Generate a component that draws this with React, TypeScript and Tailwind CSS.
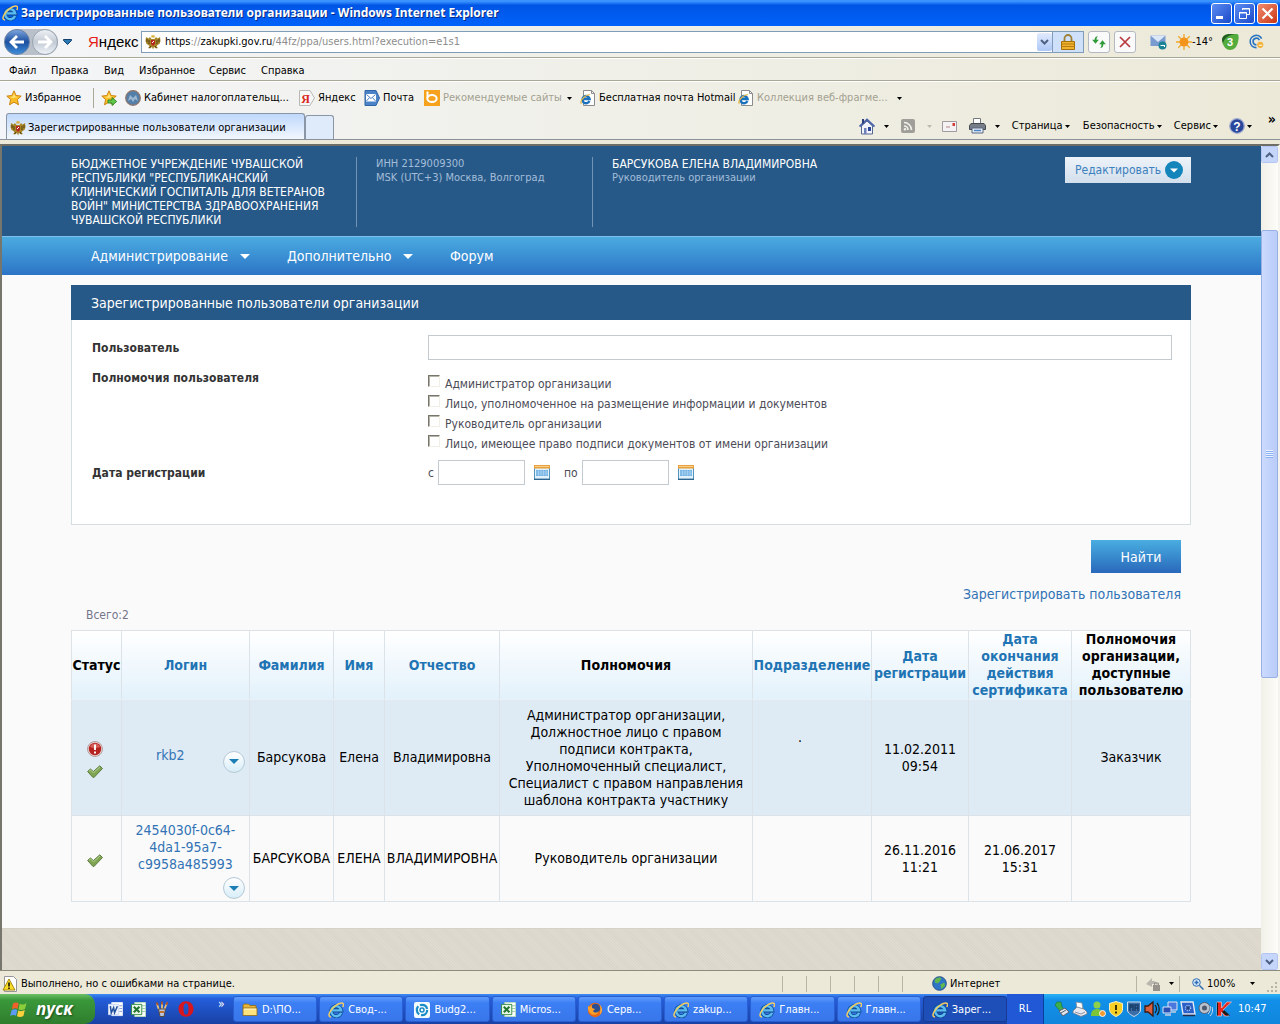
import React, { useState } from 'react';
import { clsx } from 'clsx';

type IconProps = { className?: string };

/* ---------- Icons ---------- */

function IeIcon({ className = 'size-4' }: IconProps) {
    return (
        <svg viewBox="0 0 16 16" className={clsx('shrink-0', className)} fill="none" aria-hidden="true">
            <path d="M13 10.8A5 5 0 1 1 13.2 8.4H4.8" stroke="#0d4a8f" strokeWidth="4" />
            <path d="M13 10.8A5 5 0 1 1 13.2 8.4H4.8" stroke="#5cbcf2" strokeWidth="2.4" />
            <path d="M3 15C-.4 15 .8 10.4 4.6 6.2S13.6 0 15 1.4c1 .8.6 2.2-.2 3.6" stroke="#f0cd62" strokeWidth="1.5" />
        </svg>
    );
}

function IePageIcon() {
    return (
        <svg viewBox="0 0 16 16" className="size-4 shrink-0" fill="none" aria-hidden="true">
            <path d="M3.5.5h8l3 3v12h-11z" fill="#fff" stroke="#8b8b8b" />
            <path d="M11.5.5v3h3" stroke="#8b8b8b" />
            <path d="M9.4 11A3.6 3.6 0 1 1 9.6 9H3.5" stroke="#1970bd" strokeWidth="2.4" />
            <path d="M1.5 13.8C-.8 12 3.5 5.5 10 4.5" stroke="#e7b844" strokeWidth="1.2" />
        </svg>
    );
}

function EagleIcon() {
    return (
        <svg viewBox="0 0 16 16" className="size-4 shrink-0" aria-hidden="true">
            <path d="M6.5 5 5 3 3.500 4.500 1 3 .5 7l1 3 2 1 1 1.500L3 14l2 .5L7 13l1 2.500L9 13l2 1.500 2-.5-1.500-1.500 1-1.500 2-1 1-3L15 3l-2.500 1.500L11 3 9.500 5z" fill="#a88628" />
            <path d="M2 5v3M4 6v4M14 5v3M12 6v4M6 12l-1.500 2M10 12l1.500 2" stroke="#4b3810" strokeWidth=".9" />
            <path d="m6 1 1 1 1-1.500L9 2l1-1-.5 2.500h-3z" fill="#d9ad35" />
            <path d="M6 6h4v4l-2 2-2-2z" fill="#b52a1e" />
            <path d="m7 9 2-2" stroke="#fff" />
        </svg>
    );
}

function StarIcon({ add = false }: { add?: boolean }) {
    return (
        <svg viewBox="0 0 16 16" className="size-4 shrink-0" aria-hidden="true">
            <path d="m8 .8 2.100 4.700 5.100.6-3.800 3.500 1.100 5.200L8 12.200l-4.500 2.600 1.100-5.200L.8 6.100l5.100-.6z" fill="#fbbd25" stroke="#c77d0c" strokeWidth=".9" />
            <path d="M8 3 9 6.500l3 .5-5 1-3-1 3-.5z" fill="#ffe684" />
            {add && <path d="M7 10h4V7.500l4.700 4-4.700 4V13H7z" fill="#62c64b" stroke="#207f1d" strokeWidth=".8" />}
        </svg>
    );
}

function CalendarIcon() {
    return (
        <svg viewBox="0 0 16 15" className="h-[15px] w-4" aria-hidden="true">
            <path d="M.5.5h15v14H.5z" fill="#e2f2fd" stroke="#5592bd" />
            <path d="M0 0h16v3.500H0z" fill="#e8a13c" />
            <path d="M1 1.500h14" stroke="#f8cf86" />
            <path d="M2 5h12v6H2z" fill="#6fb0e4" />
            <path d="M2 7h12M2 9h12M4.500 5v6M7 5v6M9.500 5v6M12 5v6" stroke="#c4e1f7" strokeWidth=".5" />
            <path d="M0 14.300h16" stroke="#2f6691" strokeWidth="1.400" />
        </svg>
    );
}

function CheckIcon() {
    return (
        <svg viewBox="0 0 16 13" className="h-[13px] w-4" aria-hidden="true">
            <path d="M.6 6.500 3.400 4l3 2.500L12.800.8l2.700 2.700L7.200 12.300H5.800z" fill="#7fa552" stroke="#55753a" strokeWidth=".9" />
            <path d="m2 6.300 1.500-1.200 3 2.600L13 2" stroke="#b4d093" fill="none" />
        </svg>
    );
}

function AlertIcon() {
    return (
        <svg viewBox="0 0 16 16" className="size-4" aria-hidden="true">
            <circle cx="8" cy="8" r="7.500" fill="#e9d5d5" stroke="#a88e90" strokeWidth=".8" />
            <circle cx="8" cy="8" r="6.200" fill="#b5221f" />
            <path d="M3 6a5.300 5.300 0 0 1 10 0c-3 1.500-7 1.500-10 0" fill="#d4605a" />
            <path d="M8 3.500v5.500M8 10.500v2" stroke="#fff" strokeWidth="1.900" />
        </svg>
    );
}

function Caret({ className = 'text-black' }: IconProps) {
    return (
        <svg viewBox="0 0 5 3" className={clsx('h-[3px] w-[5px] shrink-0', className)} aria-hidden="true">
            <path d="M0 0h5L2.500 3z" fill="currentColor" />
        </svg>
    );
}

function WordIcon() {
    return (
        <svg viewBox="0 0 16 16" className="size-[15px] shrink-0" fill="none" aria-hidden="true">
            <path d="M4 .5h11.500v14H4z" fill="#fff" stroke="#dfe8f8" />
            <path d="M12 4h3M12 7h3M12 10h3" stroke="#7f9bd0" />
            <path d="M.5 2.500h11v11H.5z" fill="#edf3ff" stroke="#c7d6f2" />
            <path d="m2.500 4.500 1 7L6 6l1 5.500 3-7" stroke="#23509c" strokeWidth="1.600" />
        </svg>
    );
}

function ExcelIcon() {
    return (
        <svg viewBox="0 0 16 16" className="size-[15px] shrink-0" fill="none" aria-hidden="true">
            <path d="M4 .5h11.500v15H4z" fill="#fff" stroke="#b9dcbd" />
            <path d="M12 4h3M12 7h3M12 10h3" stroke="#8cc494" />
            <path d="M.5 2.500h11v11H.5z" fill="#e9f7ea" stroke="#2f8a3b" />
            <path d="m3 5 6 6M9 5l-6 6" stroke="#24762f" strokeWidth="2.200" />
        </svg>
    );
}

function BrushesIcon() {
    return (
        <svg viewBox="0 0 16 16" className="size-4 shrink-0" fill="none" aria-hidden="true">
            <path d="m5 9-2-6M8 9V2M10 9l3-7" stroke="#e7c37c" strokeWidth="1.800" />
            <path d="M2.500 1.500 4 4M8 .5v3M13.500 1l-1 3" stroke="#a8532a" strokeWidth="1.800" />
            <path d="M4.500 8h7l-1.500 7.500H6z" fill="#b9c5de" stroke="#58493f" />
            <path d="M6 11h4" stroke="#c5702b" strokeWidth="2" />
        </svg>
    );
}

function OperaIcon() {
    return (
        <svg viewBox="0 0 16 16" className="size-4 shrink-0" aria-hidden="true">
            <path fillRule="evenodd" d="M8 .3c4.300 0 7.500 3.200 7.500 7.700S12.300 15.700 8 15.700.5 12.500.5 8 3.700.3 8 .3m0 2C6 2.300 5.500 4.500 5.500 8S6 13.700 8 13.700s2.500-2.200 2.500-5.700S10 2.300 8 2.300" fill="#d8161e" />
        </svg>
    );
}

function FolderIcon() {
    return (
        <svg viewBox="0 0 16 16" className="size-4 shrink-0" aria-hidden="true">
            <path d="M1 3.500 2 2h4.500L8 3.500h6v3H1z" fill="#e5b43a" stroke="#8f6a14" strokeWidth=".8" />
            <path d="M1 13.500V6h14v7.500z" fill="#fde27e" stroke="#8f6a14" strokeWidth=".8" />
            <path d="M2 7.200h12" stroke="#fff6c8" />
        </svg>
    );
}

function BudgetIcon() {
    return (
        <svg viewBox="0 0 16 16" className="size-4 shrink-0" fill="none" aria-hidden="true">
            <rect width="16" height="16" rx="2" fill="#f4fbff" />
            <circle cx="8" cy="8" r="5.200" stroke="#1b8cc6" strokeWidth="2.200" strokeDasharray="9 1.900" />
            <circle cx="8" cy="8" r="2" stroke="#1b8cc6" strokeWidth="1.500" />
        </svg>
    );
}

function FirefoxIcon() {
    return (
        <svg viewBox="0 0 16 16" className="size-4 shrink-0" aria-hidden="true">
            <circle cx="8" cy="8" r="7.200" fill="#e4671a" />
            <circle cx="8.500" cy="6.500" r="4.700" fill="#2c4f93" />
            <path d="M1 4 3 5l2-2v3l3 1-2 2c1 2 4 2 6 0-1 4-6 5-9 2C1 9 .6 6 1 4" fill="#f9a12b" />
            <path d="M13 3c2.500 3 2.500 7-.5 10 1-3 1.500-6 .5-10" fill="#fbc34a" />
        </svg>
    );
}

function WindowsFlag() {
    return (
        <svg viewBox="0 0 18 17" className="h-[17px] w-[18px]" aria-hidden="true">
            <path d="M3 2.500C5 1 7 1.200 8.700 2.300L7.500 8C5.800 7 4 7 1.800 8.200z" fill="#f0602b" />
            <path d="M9.700 2.800c2 1 4 1 6.800-.5L15 8c-2.500 1.500-4.500 1.300-6.500.4z" fill="#8ccd3b" />
            <path d="M1.600 9.200c2-1.200 4-1.200 5.700-.2L6 14.800c-1.800-1-3.800-1-5.800.2z" fill="#5b9bf1" />
            <path d="M8.300 9.500c2 1 4 1 6.500-.4L13.400 15c-2.400 1.400-4.500 1.200-6.400.2z" fill="#fbd03c" />
        </svg>
    );
}

/* ---------- Browser chrome ---------- */

function TitleBar() {
    const base = 'flex size-[21px] items-center justify-center rounded-[3px] border border-white';
    return (
        <header className="flex h-[26px] items-center gap-[2px] bg-linear-to-b from-[#3a93ff] from-5% via-[#0055e5] via-20% to-[#0062fb] pr-[2px] pl-[2px]">
            <IeIcon />
            <h1 className="flex-1 pl-[1px] font-['Noto_Sans',sans-serif] text-[12px] leading-5 font-bold whitespace-nowrap text-white [text-shadow:1px_1px_#0a2a80]">
                Зарегистрированные пользователи организации - Windows Internet Explorer
            </h1>
            <button aria-label="Свернуть" className={clsx(base, 'bg-linear-to-br from-[#5d8cf3] to-[#1b48c8]')}>
                <svg viewBox="0 0 13 13" className="size-[13px]"><path d="M1 9h7v3H1z" fill="#fff" /></svg>
            </button>
            <button aria-label="Восстановить" className={clsx(base, 'bg-linear-to-br from-[#5d8cf3] to-[#1b48c8]')}>
                <svg viewBox="0 0 13 13" className="size-[13px]" fill="none" stroke="#fff">
                    <path d="M4.500 3V1.500h7v6H9M4 2h8M1.500 5.500h7v6h-7zM1 6h8" />
                </svg>
            </button>
            <button aria-label="Закрыть" className={clsx(base, 'bg-linear-to-br from-[#f08a6c] to-[#c9330c]')}>
                <svg viewBox="0 0 13 13" className="size-[13px]"><path d="m1.500 1.500 10 10m0-10-10 10" stroke="#fff" strokeWidth="2.200" /></svg>
            </button>
        </header>
    );
}

function AddressRow() {
    const square = 'flex size-[22px] items-center justify-center rounded-[3px] border border-[#b4b8c2] bg-[#fafafa]';
    return (
        <div className="flex h-8 items-center border-b border-[#a9a796] pr-4 pl-1">
            <div className="flex h-[26px] items-center rounded-full bg-[#b9c0ca]">
                <button aria-label="Назад" className="flex size-[26px] items-center justify-center rounded-full border border-[#6681a8] bg-linear-to-b from-[#7ba3dc] via-[#1c4f9f] to-[#3f8edb]">
                    <svg viewBox="0 0 16 16" className="size-4"><path d="M8 2 2 8l6 6M2.500 8H15" stroke="#fff" strokeWidth="2.800" fill="none" /></svg>
                </button>
                <button aria-label="Вперед" className="ml-[2px] flex size-[26px] items-center justify-center rounded-full border border-[#9aa4b1] bg-linear-to-b from-[#eef1f5] via-[#c2cad4] to-[#eef3f8]">
                    <svg viewBox="0 0 16 16" className="size-4"><path d="m8 2 6 6-6 6M13.500 8H1" stroke="#fff" strokeWidth="2.800" fill="none" /></svg>
                </button>
            </div>
            <button aria-label="Последние страницы" className="mr-4 ml-[5px]">
                <svg viewBox="0 0 9 6" className="h-[6px] w-[9px]"><path d="M.5.5h8v1l-4 4-4-4z" fill="#2a78b4" stroke="#123f6b" /></svg>
            </button>
            <span className="w-[53px] font-['Liberation_Sans',sans-serif] text-[15px] leading-6 text-black">
                <span className="text-[#e61b1b]">Я</span>ндекс
            </span>
            <div className="flex h-[22px] min-w-0 flex-1 items-center border border-[#7f9db9] bg-white pl-[3px]">
                <EagleIcon />
                <div role="textbox" aria-label="Адрес" tabIndex={0} className="flex-1 pt-px pl-1 leading-4 whitespace-nowrap text-[#8d8d8d]">
                    <span className="text-black">https</span>://<span className="text-black">zakupki.gov.ru</span>/44fz/ppa/users.html?execution=e1s1
                </div>
                <button aria-label="Показать адреса" className="flex h-[18px] w-[15px] items-center justify-center rounded-[2px] bg-linear-to-b from-[#e1eafe] to-[#aec8f7]">
                    <svg viewBox="0 0 9 6" className="h-[6px] w-[9px]"><path d="m1 1 3.500 3.500L8 1" stroke="#4d6185" strokeWidth="2" fill="none" /></svg>
                </button>
            </div>
            <button aria-label="Отчет безопасности" className="mr-1 flex h-[22px] w-[31px] items-center justify-center border border-l-0 border-[#7f9db9] bg-[#cfe0fb]">
                <svg viewBox="0 0 14 16" className="h-4 w-[14px]">
                    <path d="M3.500 8V4.500a3.500 3.500 0 0 1 7 0V8" stroke="#9c8136" strokeWidth="1.800" fill="none" />
                    <path d="M.5 7.500h13v8H.5z" fill="#efb32f" stroke="#a56f0c" />
                    <path d="M1 10h12M1 12.500h12" stroke="#b97c12" />
                </svg>
            </button>
            <button aria-label="Обновить" className={clsx(square, 'mr-1')}>
                <svg viewBox="0 0 16 16" className="size-[14px]" fill="#2f9a38">
                    <path d="M7 1C4 1.500 3 3 3 5.500H.2L4 10l3.800-4.500H5.200C5.200 3.500 5.500 2 7 1M9 15c3-.5 4-2 4-4.500h2.800L12 6l-3.800 4.500h2.600c0 2-.3 3.500-1.800 4.500" />
                </svg>
            </button>
            <button aria-label="Остановить" className={clsx(square, 'mr-[14px]')}>
                <svg viewBox="0 0 12 12" className="size-3"><path d="m1 1 10 10M11 1 1 11" stroke="#b83a3f" strokeWidth="1.700" /></svg>
            </button>
            <div className="flex items-center gap-[8px]">
                <svg viewBox="0 0 18 16" className="h-4 w-[18px]">
                    <path d="M.5 1.500h15V12H.5z" fill="#7a9bd0" /><path d="M.5 1.500h15L8 8z" fill="#dce8f8" />
                    <circle cx="12.500" cy="11.500" r="4" fill="#1a8395" /><path d="M10.500 11.500h4.500M14.500 11v2" stroke="#fff" />
                </svg>
                <span className="flex items-center">
                    <svg viewBox="0 0 16 16" className="size-4">
                        <path d="M8 0v16M0 8h16M2.300 2.300l11.400 11.400M13.700 2.300 2.300 13.700" stroke="#f0a92d" strokeWidth="1.300" />
                        <circle cx="8" cy="8" r="4.500" fill="#f5941d" />
                    </svg>
                    -14°
                </span>
                <svg viewBox="0 0 18 16" className="h-4 w-[18px]">
                    <path d="M1 6C1 2 5 0 9 0h7c2 0 2 4 1 8-1 5-4 8-8 8S1 11 1 6" fill="#54ac3d" />
                    <path d="M1 6c0-4 4-6 8-6h5C8 1 4 3 2 9z" fill="#255e25" />
                    <text x="9" y="12" fill="#fff" fontSize="11" fontWeight="bold" textAnchor="middle" fontFamily="Liberation Sans">3</text>
                </svg>
                <svg viewBox="0 0 16 16" className="ml-[2px] size-[15px]" fill="none">
                    <path d="M13.500 5A6.500 6.500 0 1 0 8 14.500M11 6.500A3.500 3.500 0 1 0 8 11.500" stroke="#2873c2" strokeWidth="1.700" />
                    <circle cx="12" cy="11.500" r="3.300" fill="#f3b339" /><path d="M10.500 12h3.500" stroke="#fff" />
                </svg>
            </div>
        </div>
    );
}

const menuItems = [
    { name: 'Файл', width: 'w-[42px]' },
    { name: 'Правка', width: 'w-[53px]' },
    { name: 'Вид', width: 'w-[35px]' },
    { name: 'Избранное', width: 'w-[70px]' },
    { name: 'Сервис', width: 'w-[52px]' },
    { name: 'Справка', width: 'w-[60px]' },
];

function MenuRow() {
    return (
        <nav className="flex h-[23px] items-end border-t border-b border-t-white border-b-[#a9a796] pb-[2px] pl-[9px]">
            {menuItems.map((item) => (
                <button key={item.name} className={clsx('text-left whitespace-nowrap', item.width)}>{item.name}</button>
            ))}
        </nav>
    );
}

function FavoritesRow() {
    const link = 'flex items-center gap-[3px] whitespace-nowrap';
    return (
        <div className="flex h-8 items-center border-t border-white pt-px pl-[6px]">
            <button className={clsx(link, 'w-[87px]')}><StarIcon />Избранное</button>
            <span className="mr-[7px] h-5 w-px bg-[#a9a796]" />
            <button aria-label="Добавить" className="mr-2"><StarIcon add /></button>
            <a href="#" className={clsx(link, 'w-[174px]')}>
                <svg viewBox="0 0 16 16" className="size-4 shrink-0">
                    <circle cx="8" cy="8" r="7.300" fill="#547fa8" stroke="#8f7466" strokeWidth="1.200" />
                    <path d="m3 11 2-6 3 3 3-3 2 6-3-2-2 3-2-3z" fill="#9db9d2" />
                </svg>
                Кабинет налогоплательщ...
            </a>
            <a href="#" className={clsx(link, 'w-[65px]')}>
                <svg viewBox="0 0 16 16" className="size-4 shrink-0">
                    <path d="M.5.5H11L15.500 8 11 15.500H.5z" fill="#f7f7f7" stroke="#b8b8b8" />
                    <text x="6.500" y="12.500" fill="#dc251c" fontSize="12" fontWeight="bold" textAnchor="middle" fontFamily="Liberation Serif">Я</text>
                </svg>
                Яндекс
            </a>
            <a href="#" className={clsx(link, 'w-[60px]')}>
                <svg viewBox="0 0 16 16" className="size-4 shrink-0">
                    <path d="M1 .5h11L15.500 8 12 15.500H1z" fill="#4b83c8" stroke="#2f64a5" />
                    <path d="M2 4h10v7.500H2z" fill="#fff" /><path d="m2.500 4.500 4.500 4 4.500-4M2.500 11l3-3.500M11.500 11l-3-3.500" fill="none" stroke="#4b83c8" />
                </svg>
                Почта
            </a>
            <a href="#" className={clsx(link, 'w-[156px] text-[#a3a190]')}>
                <svg viewBox="0 0 16 16" className="size-4 shrink-0">
                    <path d="M0 0h16v16H0z" fill="#f6a21c" />
                    <path d="M3.500 1.500V8" stroke="#fff" strokeWidth="2" />
                    <ellipse cx="8" cy="8.500" rx="4.700" ry="3.500" stroke="#fff" strokeWidth="2" fill="none" />
                </svg>
                Рекомендуемые сайты
                <Caret className="ml-[2px] text-black" />
            </a>
            <a href="#" className={clsx(link, 'w-[158px]')}><IePageIcon />Бесплатная почта Hotmail</a>
            <a href="#" className={clsx(link, 'text-[#a3a190]')}>
                <IePageIcon />
                Коллекция веб-фрагме...
                <Caret className="ml-[6px] text-black" />
            </a>
        </div>
    );
}

function TabRow() {
    return (
        <div className="flex h-[27px] items-end border-b border-[#8a9198] pr-1 pl-[6px]">
            <button className="flex h-[26px] w-[299px] items-center gap-[2px] rounded-t-[3px] border border-b-0 border-[#8a95a5] bg-linear-to-b from-[#bfd8fb] to-[#f2f7fe] pt-[3px] pl-[3px] whitespace-nowrap">
                <EagleIcon />
                Зарегистрированные пользователи организации
            </button>
            <button aria-label="Новая вкладка" className="h-6 w-[29px] rounded-t-[3px] border border-b-0 border-[#8a95a5] bg-[#dfeafb]" />
            <div className="ml-auto flex h-[26px] items-center whitespace-nowrap">
                <button aria-label="Домой" className="mr-[9px]">
                    <svg viewBox="0 0 16 17" className="h-[17px] w-4">
                        <path d="M2.500 8v8h11V8L8 3z" fill="#f1f4fb" stroke="#55698f" />
                        <path d="m.5 8.500 7.500-7 7.500 7" stroke="#4b63a8" strokeWidth="1.800" fill="none" /><path d="M3 1h2v4L3 6z" fill="#2b3f7b" />
                        <path d="M5 10h2.500v6H5z" fill="#6c82b8" /><path d="M9 9h3v4H9z" fill="#2d4798" />
                    </svg>
                </button>
                <Caret className="mr-3 text-black" />
                <button aria-label="Каналы" className="mr-3">
                    <svg viewBox="0 0 14 14" className="size-[14px]">
                        <rect width="14" height="14" rx="2" fill="#9f9e98" />
                        <path d="M3 7a4 4 0 0 1 4 4M3 3.500a7.500 7.500 0 0 1 7.500 7.500" stroke="#f2f1ea" strokeWidth="1.600" fill="none" /><circle cx="4" cy="10.300" r="1.200" fill="#f2f1ea" />
                    </svg>
                </button>
                <Caret className="mr-[10px] text-[#bdbbae]" />
                <button aria-label="Почта" className="mr-3">
                    <svg viewBox="0 0 15 11" className="h-[11px] w-[15px]">
                        <path d="M.5.5h14v10H.5z" fill="#f4f2f2" stroke="#9f9ba0" /><path d="M10.500 2h2.500v3h-2.500z" fill="#d13d36" /><path d="M4 6h4" stroke="#b8838d" />
                    </svg>
                </button>
                <button aria-label="Печать" className="mr-[9px]">
                    <svg viewBox="0 0 17 16" className="h-4 w-[17px]">
                        <path d="M4.500.5h7v7h-7z" fill="#fff" stroke="#75787e" /><path d="M2 5.500h13l1.500 2v4H.5v-4z" fill="#777d86" stroke="#454a51" />
                        <path d="M3 10h11v5H3z" fill="#e9eef5" stroke="#586781" /><path d="M5 12.500h7" stroke="#4b83c8" strokeWidth="1.500" />
                    </svg>
                </button>
                <Caret className="mr-3 text-black" />
                <button className="flex w-[71px] items-center gap-[2px]">Страница<Caret /></button>
                <button className="flex w-[91px] items-center gap-[2px]">Безопасность<Caret /></button>
                <button className="flex w-[55px] items-center gap-[2px]">Сервис<Caret /></button>
                <button aria-label="Справка" className="flex items-center gap-[2px]">
                    <svg viewBox="0 0 16 16" className="size-4">
                        <circle cx="8" cy="8" r="7.300" fill="#29479b" stroke="#a4add0" strokeWidth="1.300" />
                        <text x="8" y="12.500" fill="#fff" fontSize="12" fontWeight="bold" textAnchor="middle" fontFamily="Liberation Sans">?</text>
                    </svg>
                    <Caret />
                </button>
                <span className="ml-4 self-start text-[14px] leading-3 font-bold">»</span>
            </div>
        </div>
    );
}

function ScrollBar() {
    const arrow = 'flex h-[17px] items-center justify-center rounded-[2px] border border-white bg-[#c6d6fb] outline-1 -outline-offset-1 outline-[#b3c6f1]';
    return (
        <div className="flex w-[17px] shrink-0 flex-col bg-linear-to-r from-[#f1f0e8] to-[#fdfdf9]">
            <button aria-label="Вверх" className={arrow}>
                <svg viewBox="0 0 9 6" className="h-[6px] w-[9px]"><path d="m1 5 3.500-3.500L8 5" stroke="#4d6185" strokeWidth="2" fill="none" /></svg>
            </button>
            <div className="flex-[67]" />
            <div className="flex flex-[446] items-center justify-center rounded-[2px] border border-[#98b0e4] bg-linear-to-r from-[#cbdafd] to-[#b9cbf8]">
                <span className="h-2 w-[7px] bg-[repeating-linear-gradient(#eef4fe_0_1px,#8cb0f8_1px_2px)]" />
            </div>
            <div className="flex-[275]" />
            <button aria-label="Вниз" className={arrow}>
                <svg viewBox="0 0 9 6" className="h-[6px] w-[9px]"><path d="m1 1 3.500 3.500L8 1" stroke="#4d6185" strokeWidth="2" fill="none" /></svg>
            </button>
        </div>
    );
}

/* ---------- Site ---------- */

function SiteHeader() {
    return (
        <div className="h-[90px] bg-[#275988] pt-[11px]">
            <div className="mx-auto flex max-w-[1121px] items-start pr-px leading-[14px]">
                <div className="w-[285px] shrink-0 text-[12px] text-white">
                    БЮДЖЕТНОЕ УЧРЕЖДЕНИЕ ЧУВАШСКОЙ<br />
                    РЕСПУБЛИКИ "РЕСПУБЛИКАНСКИЙ<br />
                    КЛИНИЧЕСКИЙ ГОСПИТАЛЬ ДЛЯ ВЕТЕРАНОВ<br />
                    ВОЙН" МИНИСТЕРСТВА ЗДРАВООХРАНЕНИЯ<br />
                    ЧУВАШСКОЙ РЕСПУБЛИКИ
                </div>
                <div className="h-[70px] w-[236px] shrink-0 border-l border-[#6f94b8] pl-[19px] text-[#a3bdd8]">
                    ИНН 2129009300<br />
                    MSK (UTC+3) Москва, Волгоград
                </div>
                <div className="h-[70px] flex-1 border-l border-[#6f94b8] pl-[19px] text-[#a3bdd8]">
                    <p className="text-[12px] text-white">БАРСУКОВА ЕЛЕНА ВЛАДИМИРОВНА</p>
                    Руководитель организации
                </div>
                <button className="flex h-[26px] w-[126px] items-center gap-1 bg-linear-to-b from-[#eef3f9] to-[#d3dfec] pl-[10px] text-[12px] text-[#3b80bd]">
                    Редактировать
                    <svg viewBox="0 0 18 18" className="size-[18px]"><circle cx="9" cy="9" r="9" fill="#1485bb" /><path d="M5 7.500h8L9 11.500z" fill="#fff" /></svg>
                </button>
            </div>
        </div>
    );
}

function SiteNav() {
    const arrow = <svg viewBox="0 0 10 5" className="h-[5px] w-[10px]"><path d="M0 0h10L5 5z" fill="#fff" /></svg>;
    return (
        <nav className="h-[39px] border-t border-[#7fc0ea] bg-linear-to-b from-[#4babe0] to-[#2d74c6] text-[14px] text-white">
            <div className="mx-auto flex h-full max-w-[1121px] items-center pr-px pl-5">
                <a href="#" className="flex w-[196px] items-center gap-3">Администрирование {arrow}</a>
                <a href="#" className="flex w-[163px] items-center gap-3">Дополнительно {arrow}</a>
                <a href="#">Форум</a>
            </div>
        </nav>
    );
}

const roles = [
    'Администратор организации',
    'Лицо, уполномоченное на размещение информации и документов',
    'Руководитель организации',
    'Лицо, имеющее право подписи документов от имени организации',
];

function SearchForm() {
    const [checked, setChecked] = useState<string[]>([]);
    const toggle = (role: string) =>
        setChecked((prev) => (prev.includes(role) ? prev.filter((r) => r !== role) : [...prev, role]));
    const field = 'h-[25px] border border-[#c3cbd1] bg-white px-1 outline-none';

    return (
        <section>
            <h2 className="flex h-[35px] items-center bg-[#275988] pl-5 text-[14px] text-white">
                Зарегистрированные пользователи организации
            </h2>
            <div className="grid h-[205px] grid-cols-[336px_1fr] content-start border border-t-0 border-[#d5dee3] bg-white pt-[15px] pr-[18px] pl-5 text-[12px] text-[#4c4c57]">
                <label htmlFor="user" className="pt-[5px] leading-4 font-bold text-[#333]">Пользователь</label>
                <input id="user" type="text" className={field} />
                <p className="pt-[10px] leading-4 font-bold text-[#333]">Полномочия пользователя</p>
                <div className="pt-[13px]">
                    {roles.map((role) => (
                        <label key={role} className="flex h-5 items-start gap-[5px] leading-[22px]">
                            <input
                                type="checkbox"
                                checked={checked.includes(role)}
                                onChange={() => toggle(role)}
                                className="mt-[2px] size-3 appearance-none border border-t-[#77756c] border-r-[#f1efe6] border-b-[#f1efe6] border-l-[#77756c] bg-white shadow-[inset_1px_1px_#b5b3a8] checked:bg-[#77756c]"
                            />
                            {role}
                        </label>
                    ))}
                </div>
                <p className="pt-[12px] leading-4 font-bold text-[#333]">Дата регистрации</p>
                <div className="flex items-center pt-[7px]">
                    <label htmlFor="from" className="w-[10px]">с</label>
                    <input id="from" type="text" className={clsx(field, 'w-[87px]')} />
                    <button aria-label="Выбрать дату начала" className="mr-[14px] ml-[9px]"><CalendarIcon /></button>
                    <label htmlFor="to" className="w-[18px]">по</label>
                    <input id="to" type="text" className={clsx(field, 'w-[87px]')} />
                    <button aria-label="Выбрать дату окончания" className="ml-[9px]"><CalendarIcon /></button>
                </div>
            </div>
        </section>
    );
}

const columns = [
    { title: 'Статус', width: 'w-[50px]' },
    { title: 'Логин', width: 'w-[128px]', sortable: true },
    { title: 'Фамилия', width: 'w-[84px]', sortable: true },
    { title: 'Имя', width: 'w-[51px]', sortable: true },
    { title: 'Отчество', width: 'w-[115px]', sortable: true },
    { title: 'Полномочия', width: 'w-[253px]' },
    { title: 'Подразделение', width: 'w-[119px]', sortable: true },
    { title: 'Дата\nрегистрации', width: 'w-[97px]', sortable: true },
    { title: 'Дата\nокончания\nдействия\nсертификата', width: 'w-[103px]', sortable: true },
    { title: 'Полномочия\nорганизации,\nдоступные\nпользователю', width: 'w-[119px]' },
];

const users = [
    {
        alert: true,
        login: 'rkb2',
        cells: [
            'Барсукова',
            'Елена',
            'Владимировна',
            'Администратор организации,\nДолжностное лицо с правом\nподписи контракта,\nУполномоченный специалист,\nСпециалист с правом направления\nшаблона контракта участнику',
            '.',
            '11.02.2011\n09:54',
            '',
            'Заказчик',
        ],
    },
    {
        alert: false,
        login: '2454030f-0c64-\n4da1-95a7-\nc9958a485993',
        cells: ['БАРСУКОВА', 'ЕЛЕНА', 'ВЛАДИМИРОВНА', 'Руководитель организации', '', '26.11.2016\n11:21', '21.06.2017\n15:31', ''],
    },
];

function UsersTable() {
    return (
        <table className="w-full table-fixed border-collapse text-center text-[14px] leading-[17px] whitespace-pre text-black">
            <thead>
                <tr className="h-[68px] bg-linear-to-b from-white to-[#e2f1fb]">
                    {columns.map((col) => (
                        <th key={col.title} className={clsx('border border-[#dce3e8] border-b-[#e9f1f6] p-0 font-bold', col.width)}>
                            {col.sortable ? <a href="#" className="text-[#1f74b4]">{col.title}</a> : col.title}
                        </th>
                    ))}
                </tr>
            </thead>
            <tbody>
                {users.map((user) => (
                    <tr key={user.login} className={user.alert ? 'h-[116px] bg-[#dfebf4]' : 'h-[86px]'}>
                        <td className="border border-[#dce3e8] p-0">
                            <div className="flex flex-col items-center gap-2 pt-1 pr-1">
                                {user.alert && <AlertIcon />}
                                <CheckIcon />
                            </div>
                        </td>
                        <td className="border border-[#dce3e8] p-0">
                            <div className={clsx('flex pt-1', user.alert ? 'items-center pl-[34px]' : 'flex-col items-center')}>
                                <a href="#" className={clsx('text-[#3273b5]', user.alert && 'pb-2')}>{user.login}</a>
                                <button aria-label="Действия" className="mt-1 mr-1 ml-auto flex size-[22px] items-center justify-center rounded-full border border-[#b5c9d6] bg-linear-to-b from-white to-[#d8edf8]">
                                    <svg viewBox="0 0 10 5" className="h-[5px] w-[10px]"><path d="M0 0h10L5 5z" fill="#1a7fb4" /></svg>
                                </button>
                            </div>
                        </td>
                        {user.cells.map((cell, idx) => (
                            <td key={idx} className={clsx('border border-[#dce3e8] p-0', cell === '.' && 'pr-6 pb-10')}>{cell}</td>
                        ))}
                    </tr>
                ))}
            </tbody>
        </table>
    );
}

/* ---------- Status bar and taskbar ---------- */

function StatusBar() {
    const split = 'h-4 border-l border-[#b9b5a3]';
    return (
        <div className="flex h-6 items-center border-t border-[#8d8b7e] bg-[#ece9d8] pt-[2px] pl-[2px] whitespace-nowrap">
            <svg viewBox="0 0 16 16" className="mr-[3px] size-4 shrink-0">
                <path d="M2.500.5h9l3 3v12h-12z" fill="#fff" stroke="#979797" />
                <path d="m7 3 6 11H1z" fill="#fbdc27" stroke="#a68a0b" /><path d="M7 6.500v4M7 11.500V13" stroke="#000" strokeWidth="1.500" />
            </svg>
            <span className="flex-1">Выполнено, но с ошибками на странице.</span>
            {[0, 1, 2, 3, 4, 5].map((n) => <span key={n} className={clsx(split, 'w-6')} />)}
            <span className="flex w-[210px] items-center gap-[3px] pl-[6px]">
                <svg viewBox="0 0 16 16" className="size-[15px]">
                    <circle cx="8" cy="8" r="7.300" fill="#2e75c7" stroke="#234f86" /><path d="M3 4c3-3 6-3 7-1L8 6 6 8 3 7zM9 9l4-2 1 3-4 4z" fill="#62b84d" />
                </svg>
                Интернет
            </span>
            <span className={clsx(split, 'flex w-[43px] items-center gap-2 pl-2')}>
                <svg viewBox="0 0 16 16" className="size-4"><path d="M1 8 7 2v3c4 0 6 2 7 5-2-2-4-2-7-2v3z" fill="#b8b6ad" /><path d="M8 9h7v6H8z" fill="#95938c" /><path d="M9.500 9V7h4v2" stroke="#95938c" fill="none" /></svg>
                <Caret />
            </span>
            <span className={clsx(split, 'flex w-[88px] items-center gap-[3px] pl-3')}>
                <svg viewBox="0 0 12 12" className="size-3"><circle cx="4.500" cy="4.500" r="3.800" fill="#d6eafe" stroke="#2f6bb0" /><path d="M4.500 2.500v4M2.500 4.500h4M7.500 7.500l4 4" stroke="#2f6bb0" strokeWidth="1.500" /></svg>
                100%
                <Caret className="ml-3 text-black" />
            </span>
            <svg viewBox="0 0 12 12" className="mr-px size-3 self-end" fill="#b8b4a2"><path d="M8 0h2v2H8zM4 4h2v2H4zM8 4h2v2H8zM0 8h2v2H0zM4 8h2v2H4zM8 8h2v2H8z" /></svg>
        </div>
    );
}

const tasks = [
    { name: 'D:\\ПО...', Icon: FolderIcon },
    { name: 'Свод-...', Icon: IeIcon },
    { name: 'Budg2...', Icon: BudgetIcon },
    { name: 'Micros...', Icon: ExcelIcon },
    { name: 'Серв...', Icon: FirefoxIcon },
    { name: 'zakup...', Icon: IeIcon },
    { name: 'Главн...', Icon: IeIcon },
    { name: 'Главн...', Icon: IeIcon },
    { name: 'Зарег...', Icon: IeIcon, active: true },
];

// Notification area drawings, all on a 16x16 grid
const trayIcons = [
    <g><path d="M3 1h4l1 5 2 2-4 2-5-6z" fill="#3dae4a" stroke="#1c7029" strokeWidth=".6" /><path d="m5 10 6-3 4 4-6 4z" fill="#dfe3ea" stroke="#596275" /><path d="m7 12 5-3" stroke="#596275" /></g>,
    <g><path d="m4 1 6 1 1 6H5z" fill="#fff" stroke="#7d8899" strokeWidth=".8" /><path d="m1 10 4-4 7 2 3 3v2l-6 2.500L1 12z" fill="#e6eaf0" stroke="#6c7686" strokeWidth=".8" /><path d="m3 11 6 2 4-2" stroke="#8693a8" fill="none" /></g>,
    <g><circle cx="7" cy="4" r="3.500" fill="#8ed04b" /><path d="M1 15c0-5 2-7 6-7s6 2 6 7z" fill="#7cc537" /><circle cx="12.500" cy="12.500" r="3" fill="#f39a35" stroke="#fff" strokeWidth=".9" /></g>,
    <g><path d="m8 .5 6.500 2V8c0 4-3 6-6.500 7.500C4.500 14 1.500 12 1.500 8V2.500z" fill="#f8cf25" stroke="#f7efc0" /><path d="M8 4v5M8 10.500v2" stroke="#3c3307" strokeWidth="2" /></g>,
    <g><path d="M1.500 1h13v8c0 3-3.500 5-6.500 6.500C5 14 1.500 12 1.500 9z" fill="#3c6ea8" stroke="#d3e0ec" /><path d="M4 10V4h3v6M9 10V4h3v6M4 6h3M9 7h3" stroke="#173c66" fill="none" strokeWidth="1.400" /></g>,
    <g><path d="M1 5h3l5-4v14l-5-4H1z" fill="#d8603f" stroke="#3c1a12" strokeWidth="1.300" /><path d="M11 4c2 2 2 6 0 8M13 2c3 3 3 9 0 12" stroke="#1c1c1c" fill="none" strokeWidth="1.200" /></g>,
    <g><path d="M6 1h9v8H6z" fill="#4a78df" stroke="#dfe6f4" /><path d="M1 6h8v6H1z" fill="#2a50b6" stroke="#dfe6f4" /><path d="M3 14h6M10 11h4" stroke="#c6d0e2" strokeWidth="1.500" /></g>,
    <g><path d="M1 1h12l2 12H3z" fill="#2a5fc9" stroke="#e3e8f2" strokeWidth="1.400" /><circle cx="8" cy="7" r="2.500" fill="#1c3f8d" stroke="#a9d0ff" strokeDasharray="1 1" strokeWidth="1.500" /><path d="M3 14.500h12" stroke="#222c4a" strokeWidth="1.500" /></g>,
    <g><circle cx="6.500" cy="7" r="5.500" fill="#b8c1ce" stroke="#535d6d" /><circle cx="6.500" cy="7" r="2.500" fill="#4e596b" /><path d="M10 13c2-2 3-5 2-8M12 15c3-3 3-7 2-9" stroke="#d2d9e4" fill="none" /></g>,
    <g><path d="M1 1h4.500v6L11 1h4.500L7 9l6 6H8.500L5.500 11v4H1z" fill="#e8281e" stroke="#f6dcda" strokeWidth=".6" /><path d="m8 9 6 5.500h-4L6 11z" fill="#1b1b1b" /><path d="M1.500 1.500v13" stroke="#1b1b1b" /></g>,
];

function Taskbar() {
    return (
        <footer className="flex h-[30px] items-stretch bg-linear-to-b from-[#3f8cf3] from-0% via-[#245edb] via-15% to-[#1941a5] to-100% leading-4 text-white">
            <button className="flex w-[95px] items-center gap-2 rounded-r-[10px] bg-linear-to-b from-[#6cc066] via-[#3a983a] via-20% to-[#2f7d2e] pl-[10px] font-['Open_Sans',sans-serif] text-[17px] leading-5 font-bold italic [text-shadow:1px_1px_2px_#1b4b1b]">
                <WindowsFlag />
                пуск
            </button>
            <div className="flex w-[138px] items-center gap-2 pl-[13px]">
                <WordIcon /><ExcelIcon /><BrushesIcon /><OperaIcon />
                <span className="mt-1 ml-4 self-start text-[12px] leading-3">»</span>
            </div>
            <div className="flex min-w-0 flex-1 items-center gap-[2px]">
                {tasks.map(({ name, Icon, active }, idx) => (
                    <button
                        key={idx}
                        className={clsx(
                            'flex h-[26px] min-w-0 flex-1 items-center gap-1 rounded-[3px] border pt-px pl-2 whitespace-nowrap',
                            active ? 'border-[#173a93] bg-[#1e4fb9]' : 'border-[#2a5fd4] bg-linear-to-b from-[#5a97fb] from-5% via-[#3c7ff4] via-25% to-[#3876ea]'
                        )}
                    >
                        <Icon />
                        {name}
                    </button>
                ))}
            </div>
            <button className="w-9 bg-[#2058d5]">RL</button>
            <div className="flex w-[237px] items-center border-l border-[#0b3f9e] bg-linear-to-b from-[#29b3f5] from-0% via-[#1290e9] via-20% to-[#1186dd] pl-[10px]">
                {trayIcons.map((icon, idx) => (
                    <svg key={idx} viewBox="0 0 16 16" className="mr-[2px] size-4 shrink-0" aria-hidden="true">{icon}</svg>
                ))}
                <time className="ml-1">10:47</time>
            </div>
        </footer>
    );
}

export default function App() {
    return (
        <div className="flex min-h-screen flex-col bg-[#ece9d8] font-['DejaVu_Sans_Condensed','Noto_Sans',sans-serif] text-[11px] leading-[14px] text-black">
            <TitleBar />
            <div className="bg-linear-to-r from-[#f4f5f8] via-[#f0f0e9] via-45% to-[#ece9d8]">
                <AddressRow />
                <MenuRow />
                <FavoritesRow />
                <TabRow />
            </div>
            <div className="mt-1 flex flex-1 border-t-2 border-r-2 border-l-2 border-t-[#6e6d66] border-r-[#f4f3ee] border-l-[#77766c]">
                <main className="flex min-w-0 flex-1 flex-col bg-[#fafafa]">
                    <SiteHeader />
                    <SiteNav />
                    <div className="mx-auto w-full max-w-[1121px] pt-[10px] pr-px pb-[26px]">
                        <SearchForm />
                        <div className="flex flex-col items-end pt-[15px] pr-[10px]">
                            <button className="h-[33px] w-[90px] bg-linear-to-b from-[#4aaee0] to-[#2a68bb] pl-[10px] text-[14px] text-white">Найти</button>
                            <a href="#" className="mt-3 text-[14px] leading-[18px] text-[#3273b5]">Зарегистрировать пользователя</a>
                        </div>
                        <p className="pt-1 pb-[7px] pl-[15px] text-[12px] leading-4 text-[#75758a]">Всего:2</p>
                        <UsersTable />
                    </div>
                    <div className="flex-1 border-t border-[#d5d2c6] bg-[#dcd8cc] bg-[repeating-linear-gradient(45deg,#dad6ca_0_1px,#dfdbd0_1px_2px)]" />
                </main>
                <ScrollBar />
            </div>
            <StatusBar />
            <Taskbar />
        </div>
    );
}
